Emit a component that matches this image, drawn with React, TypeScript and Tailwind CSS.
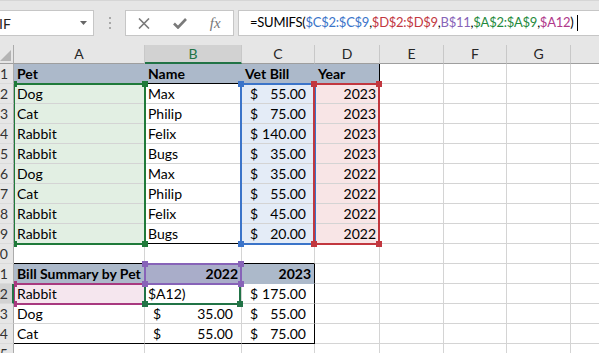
import React from 'react'

const GRID = 'border-r-[#d4d4d4]'
const GRIDB = 'border-b-[#d4d4d4]'

type CellProps = {
  children?: React.ReactNode
  cls?: string
  r?: string
  b?: string
}

function Cell({ children, cls = '', r = GRID, b = GRIDB }: CellProps) {
  return (
    <div className={`h-[20px] border-r border-b ${r} ${b} overflow-hidden whitespace-nowrap text-[14px] leading-[19px] px-[3px] text-black ${cls}`}>
      {children}
    </div>
  )
}

function Acct({ v }: { v: string }) {
  return (
    <div className="flex justify-between pl-[5px] pr-[5px]">
      <span>$</span>
      <span>{v}</span>
    </div>
  )
}

function RowHead({ n, active = false }: { n: number; active?: boolean }) {
  return (
    <div
      className={`relative z-10 h-[20px] overflow-hidden border-b border-b-[#dadada] border-r ${
        active ? 'bg-[#d2d2d2] border-r-2 border-r-[#217346]' : 'bg-[#e6e6e6] border-r-[#ababab]'
      }`}
    >
      <div className="w-[30px] -ml-[22px] text-right text-[14px] leading-[19px] text-[#333]">{n}</div>
    </div>
  )
}

const fills = {
  head: 'bg-[#acb9ca]',
  green: 'bg-[#e2efe3]',
  blue: 'bg-[#e4ecf7]',
  red: 'bg-[#f8e5e6]',
  pink: 'bg-[#f5e6ee]',
  purple: 'bg-[#a9adc9]',
}

const pets = [
  ['Dog', 'Max', '55.00', '2023'],
  ['Cat', 'Philip', '75.00', '2023'],
  ['Rabbit', 'Felix', '140.00', '2023'],
  ['Rabbit', 'Bugs', '35.00', '2023'],
  ['Dog', 'Max', '35.00', '2022'],
  ['Cat', 'Philip', '55.00', '2022'],
  ['Rabbit', 'Felix', '45.00', '2022'],
  ['Rabbit', 'Bugs', '20.00', '2022'],
]

function Tail() {
  return (
    <>
      <Cell />
      <Cell />
      <Cell />
      <Cell />
    </>
  )
}

export default function App() {
  return (
    <div className="w-[599px] h-[353px] overflow-hidden bg-white font-['Lato',sans-serif]">
      {/* formula bar */}
      <div className="flex h-[45px] items-start pt-[9px] bg-[#e6e6e6] border-t border-t-[#d6d6d6]">
        <div className="w-[94px] h-[26px] bg-white border border-l-0 border-[#c6c6c6] flex items-center justify-between pr-[6px]">
          <span className="text-[14px] text-[#222] -ml-[1px]">IF</span>
          <svg width="7" height="4" viewBox="0 0 7 4">
            <polygon points="0,0 7,0 3.5,4" fill="#666" />
          </svg>
        </div>
        <div className="w-[31px] h-[26px] flex flex-col items-center justify-center gap-[3px]">
          <span className="w-[2px] h-[2px] bg-[#a8a8a8]" />
          <span className="w-[2px] h-[2px] bg-[#a8a8a8]" />
          <span className="w-[2px] h-[2px] bg-[#a8a8a8]" />
        </div>
        <div className="w-[109px] h-[26px] bg-white border border-[#c6c6c6] flex items-center">
          <div className="w-[36px] flex justify-center">
            <svg width="12" height="11" viewBox="0 0 12 11">
              <path d="M1 0.5 L11 10.5 M11 0.5 L1 10.5" stroke="#7a7a7a" strokeWidth="1.6" />
            </svg>
          </div>
          <div className="w-[36px] flex justify-center">
            <svg width="14" height="11" viewBox="0 0 14 11">
              <path d="M1 5.5 L5 9.5 L13 1" stroke="#7a7a7a" strokeWidth="2.6" fill="none" />
            </svg>
          </div>
          <div className="w-[36px] flex justify-center">
            <span className="font-['Liberation_Serif',serif] italic text-[15px] text-[#777] leading-none">fx</span>
          </div>
        </div>
        <div className="ml-[4px] flex-1 h-[26px] bg-white border border-r-0 border-[#c6c6c6] flex items-center pl-[11px] text-[13px] tracking-[-0.25px] whitespace-nowrap overflow-hidden text-black">
          <span>=SUMIFS(</span>
          <span className="text-[#3b74c9]">$C$2:$C$9</span>
          <span>,</span>
          <span className="text-[#c2373f]">$D$2:$D$9</span>
          <span>,</span>
          <span className="text-[#8763b8]">B$11</span>
          <span>,</span>
          <span className="text-[#1f8a3c]">$A$2:$A$9</span>
          <span>,</span>
          <span className="text-[#b0388a]">$A12</span>
          <span>)</span>
          <span className="ml-[3px] w-[1px] h-[16px] bg-black" />
        </div>
      </div>

      {/* sheet */}
      <div className="relative grid grid-cols-[14px_131px_97px_73px_65px_64px_63px_64px_64px]">
        {/* column headers */}
        <div className="relative z-10 h-[19px] bg-[#e6e6e6] border-r border-b border-r-[#ababab] border-b-[#9e9e9e] flex items-end justify-end">
          <svg width="11" height="11" viewBox="0 0 11 11" className="mr-[2px] mb-[2px]">
            <polygon points="11,0 11,11 0,11" fill="#b4b4b4" />
          </svg>
        </div>
        {['A', 'B', 'C', 'D', 'E', 'F', 'G', ''].map((l, i) => (
          <div
            key={i}
            className={`h-[19px] text-center text-[14px] leading-[18px] border-r border-r-[#c8c8c8] ${
              l === 'B'
                ? 'bg-[#d2d2d2] border-b-2 border-b-[#217346] text-[#217346]'
                : 'bg-[#e6e6e6] border-b border-b-[#9e9e9e] text-[#262626]'
            }`}
          >
            {l}
          </div>
        ))}

        {/* row 1 */}
        <RowHead n={1} />
        <Cell cls={`${fills.head} font-bold`} r="border-r-transparent" b="border-b-black">Pet</Cell>
        <Cell cls={`${fills.head} font-bold`} r="border-r-transparent" b="border-b-black">Name</Cell>
        <Cell cls={`${fills.head} font-bold`} r="border-r-transparent" b="border-b-black">Vet Bill</Cell>
        <Cell cls={`${fills.head} font-bold`} r="border-r-black" b="border-b-black">Year</Cell>
        <Tail />

        {pets.map((p, i) => {
          const last = i === pets.length - 1
          const b = last ? 'border-b-black' : GRIDB
          return (
            <React.Fragment key={i}>
              <RowHead n={i + 2} />
              <Cell cls={fills.green} b={b}>{p[0]}</Cell>
              <Cell b={b}>{p[1]}</Cell>
              <Cell cls={fills.blue} b={b}><Acct v={p[2]} /></Cell>
              <Cell cls={`${fills.red} text-right`} r="border-r-black" b={b}>{p[3]}</Cell>
              <Tail />
            </React.Fragment>
          )
        })}

        {/* row 10 */}
        <RowHead n={10} />
        <Cell b="border-b-black" />
        <Cell b="border-b-black" />
        <Cell b="border-b-black" />
        <Cell />
        <Tail />

        {/* row 11 */}
        <RowHead n={11} />
        <Cell cls={`${fills.head} font-bold`} r="border-r-transparent" b="border-b-transparent">Bill Summary by Pet</Cell>
        <Cell cls={`${fills.purple} font-bold text-right`} r="border-r-transparent" b="border-b-transparent">2022</Cell>
        <Cell cls={`${fills.head} font-bold text-right`} r="border-r-black" b="border-b-transparent">2023</Cell>
        <Cell />
        <Tail />

        {/* row 12 */}
        <RowHead n={12} active />
        <Cell cls={fills.pink}>Rabbit</Cell>
        <Cell>$A12)</Cell>
        <Cell r="border-r-black"><Acct v="175.00" /></Cell>
        <Cell />
        <Tail />

        {/* row 13 */}
        <RowHead n={13} />
        <Cell>Dog</Cell>
        <Cell><Acct v="35.00" /></Cell>
        <Cell r="border-r-black"><Acct v="55.00" /></Cell>
        <Cell />
        <Tail />

        {/* row 14 */}
        <RowHead n={14} />
        <Cell b="border-b-black">Cat</Cell>
        <Cell b="border-b-black"><Acct v="55.00" /></Cell>
        <Cell r="border-r-black" b="border-b-black"><Acct v="75.00" /></Cell>
        <Cell />
        <Tail />

        {/* row 15 */}
        <RowHead n={15} />
        <Cell />
        <Cell />
        <Cell />
        <Cell />
        <Tail />

        {/* formula reference highlights */}
        <div className="absolute left-[13px] top-[38px] w-[133px] h-[162px] border-2 border-[#1f7a3a]">
          <span className="absolute -left-[4px] -top-[4px] w-[6px] h-[6px] bg-[#1f7a3a]" />
          <span className="absolute -right-[4px] -top-[4px] w-[6px] h-[6px] bg-[#1f7a3a]" />
          <span className="absolute -left-[4px] -bottom-[4px] w-[6px] h-[6px] bg-[#1f7a3a]" />
          <span className="absolute -right-[4px] -bottom-[4px] w-[6px] h-[6px] bg-[#1f7a3a]" />
        </div>
        <div className="absolute left-[240px] top-[38px] w-[76px] h-[162px] border-2 border-[#3b74c9]">
          <span className="absolute -left-[4px] -top-[4px] w-[6px] h-[6px] bg-[#3b74c9]" />
          <span className="absolute -left-[4px] -bottom-[4px] w-[6px] h-[6px] bg-[#3b74c9]" />
        </div>
        <div className="absolute left-[313px] top-[38px] w-[67px] h-[162px] border-2 border-[#c2373f]">
          <span className="absolute -left-[4px] -top-[4px] w-[6px] h-[6px] bg-[#c2373f]" />
          <span className="absolute -right-[4px] -top-[4px] w-[6px] h-[6px] bg-[#c2373f]" />
          <span className="absolute -left-[4px] -bottom-[4px] w-[6px] h-[6px] bg-[#c2373f]" />
          <span className="absolute -right-[4px] -bottom-[4px] w-[6px] h-[6px] bg-[#c2373f]" />
        </div>
        <div className="absolute left-[13px] top-[238px] w-[133px] h-[22px] border-2 border-[#a8397f]">
          <span className="absolute -left-[4px] -top-[4px] w-[6px] h-[6px] bg-[#a8397f]" />
          <span className="absolute -right-[4px] -top-[4px] w-[6px] h-[6px] bg-[#a8397f]" />
          <span className="absolute -left-[4px] -bottom-[4px] w-[6px] h-[6px] bg-[#a8397f]" />
          <span className="absolute -right-[4px] -bottom-[4px] w-[6px] h-[6px] bg-[#a8397f]" />
        </div>
        {/* active cell B12 */}
        <div className="absolute left-[144px] top-[238px] w-[97px] h-[22px] border-2 border-[#217346]">
          <span className="absolute -left-[4px] -bottom-[4px] w-[6px] h-[6px] bg-[#217346]" />
          <span className="absolute -right-[4px] -bottom-[4px] w-[6px] h-[6px] bg-[#217346]" />
        </div>
        <div className="absolute left-[144px] top-[218px] w-[98px] h-[22px] border-2 border-[#8763b8]">
          <span className="absolute -left-[4px] -top-[4px] w-[6px] h-[6px] bg-[#8763b8]" />
          <span className="absolute -right-[4px] -top-[4px] w-[6px] h-[6px] bg-[#8763b8]" />
          <span className="absolute -left-[4px] -bottom-[4px] w-[6px] h-[6px] bg-[#8763b8]" />
          <span className="absolute -right-[4px] -bottom-[4px] w-[6px] h-[6px] bg-[#8763b8]" />
        </div>
      </div>
    </div>
  )
}
